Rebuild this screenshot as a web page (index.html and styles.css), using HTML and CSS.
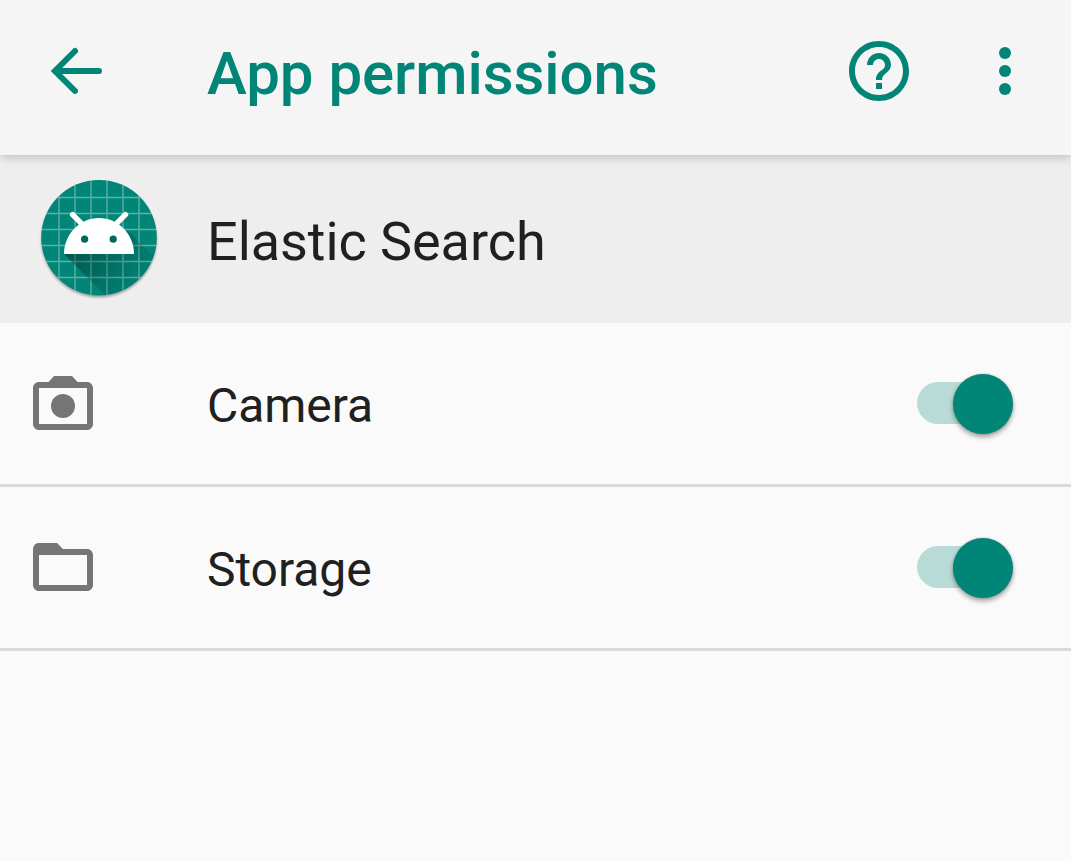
FILE: index.html
```html
<!DOCTYPE html>
<html lang="en">
<head>
  <meta charset="utf-8">
  <title>App permissions</title>
  <link rel="stylesheet" href="styles.css">
</head>
<body>
  <header class="toolbar">
    <svg class="icon back" viewBox="0 0 72 72" role="img" aria-label="Back">
      <path d="M48 16 28 36l20 20M28 36h44" />
    </svg>
    <h1 class="title">App permissions</h1>
    <svg class="icon help" viewBox="0 0 24 24" role="img" aria-label="Help">
      <path d="M11 18h2v-2h-2v2zm1-16C6.48 2 2 6.48 2 12s4.48 10 10 10 10-4.48 10-10S17.52 2 12 2zm0 18c-4.41 0-8-3.59-8-8s3.59-8 8-8 8 3.59 8 8-3.59 8-8 8zm0-14c-2.21 0-4 1.79-4 4h2c0-1.1.9-2 2-2s2 .9 2 2c0 2-3 1.75-3 5h2c0-2.25 3-2.5 3-5 0-2.21-1.79-4-4-4z" />
    </svg>
    <svg class="icon more" viewBox="0 0 24 24" role="img" aria-label="More options">
      <circle cx="12" cy="6" r="2" /><circle cx="12" cy="12" r="2" /><circle cx="12" cy="18" r="2" />
    </svg>
  </header>

  <main>
    <section class="app">
      <svg class="app-icon" viewBox="0 4 140 140" aria-hidden="true">
        <defs>
          <clipPath id="disc"><circle cx="69" cy="72.7" r="57.8" /></clipPath>
          <linearGradient id="cast" gradientUnits="userSpaceOnUse" x1="46" y1="76" x2="106" y2="124">
            <stop offset="0" stop-color="#000" stop-opacity=".34" />
            <stop offset="1" stop-color="#000" stop-opacity=".02" />
          </linearGradient>
        </defs>
        <circle class="disc" cx="69" cy="72.7" r="57.8" />
        <g clip-path="url(#disc)">
          <path class="grid" d="M29 10v130M45 10v130M61 10v130M77 10v130M93 10v130M109 10v130M5 32.5h130M5 48.5h130M5 64.5h130M5 80.5h130M5 96.5h130M5 112.5h130" />
          <path d="M34 89 81 136h63v-24L98 66z" fill="url(#cast)" />
        </g>
        <path class="antennae" d="m42.6 49.6 10 10M95.4 49.6l-10 10" />
        <path class="head" d="M34 89c0-20 16-36 35-36s35 16 35 36z" />
        <circle class="eye" cx="54.6" cy="74.2" r="3.6" /><circle class="eye" cx="83.2" cy="74.2" r="3.6" />
      </svg>
      <h2 class="app-name">Elastic Search</h2>
    </section>

    <ul class="permissions">
      <li class="permission">
        <svg class="icon glyph" viewBox="0 0 24 24" aria-hidden="true">
          <path fill-rule="evenodd" d="M20 5h-3.17L15 3H9L7.17 5H4c-1.1 0-2 .9-2 2v12c0 1.1.9 2 2 2h16c1.1 0 2-.9 2-2V7c0-1.1-.9-2-2-2zm0 14H4V7h16v12z" />
          <circle cx="12" cy="13" r="4" />
        </svg>
        <span class="label">Camera</span>
        <span class="switch" role="switch" aria-checked="true" aria-label="Camera"><span class="thumb"></span></span>
      </li>
      <li class="permission">
        <svg class="icon glyph" viewBox="0 0 24 24" aria-hidden="true">
          <path fill-rule="evenodd" d="M10 4H4c-1.1 0-2 .9-2 2v12c0 1.1.9 2 2 2h16c1.1 0 2-.9 2-2V8c0-1.1-.9-2-2-2h-8l-2-2zm10 14H4V8h16v10z" />
        </svg>
        <span class="label">Storage</span>
        <span class="switch" role="switch" aria-checked="true" aria-label="Storage"><span class="thumb"></span></span>
      </li>
    </ul>
  </main>
</body>
</html>
```
FILE: styles.css
```css
* {
  box-sizing: border-box;
}

body {
  margin: 0;
  min-height: 100vh;
  background: #fafafa;
  color: #202020;
  font-family: Roboto, sans-serif;
}

.toolbar {
  position: relative;
  display: flex;
  align-items: center;
  height: 155px;
  padding: 0 30px 13px 27px;
  background: #f5f5f5;
  box-shadow: 0 2px 8px rgba(0, 0, 0, .16), 0 3px 16px rgba(0, 0, 0, .05);
  color: #008577;
}

.icon {
  flex: none;
  width: 72px;
  height: 72px;
  fill: currentColor;
}

.back {
  margin-right: 108px;
  overflow: visible;
}

.back path {
  fill: none;
  stroke: currentColor;
  stroke-width: 6;
  stroke-linecap: round;
}

.title {
  flex: 1;
  margin: 0;
  padding-top: 5px;
  font-size: 60px;
  font-weight: 500;
  letter-spacing: -.06px;
}

.more {
  margin-left: 54px;
}

.app {
  display: flex;
  align-items: center;
  height: 168px;
  padding-left: 30px;
  background: #eee;
}

.app-icon {
  flex: none;
  width: 140px;
  height: 140px;
  margin-right: 37px;
}

.disc {
  fill: #008577;
  filter: drop-shadow(0 2px 1px rgba(0, 0, 0, .32));
}

.grid {
  fill: none;
  stroke: #fff;
  stroke-opacity: .36;
  stroke-width: 1.4;
}

.antennae {
  fill: none;
  stroke: #fff;
  stroke-width: 5.5;
  stroke-linecap: round;
}

.head {
  fill: #fff;
}

.eye {
  fill: #00695d;
}

.app-name {
  margin: 0;
  padding-top: 5px;
  font-size: 54px;
  font-weight: 400;
  letter-spacing: -.06px;
}

.permissions {
  margin: 0;
  padding: 0;
  list-style: none;
}

.permission {
  display: flex;
  align-items: center;
  height: 164px;
  padding: 0 58px 1px 27px;
  border-bottom: 3px solid #dadada;
}

.glyph {
  margin-right: 108px;
  color: #757575;
}

.label {
  flex: 1;
  padding-top: 5px;
  font-size: 48px;
  letter-spacing: -.06px;
}

.switch {
  display: flex;
  align-items: center;
  justify-content: flex-end;
  width: 96px;
  height: 42px;
  border-radius: 21px;
  background: linear-gradient(to right, #b8dbd8 75px, transparent 75px);
}

.thumb {
  flex: none;
  width: 60px;
  height: 60px;
  margin: 1px .5px 0 0;
  border-radius: 50%;
  background: #008577;
  box-shadow: 0 3px 5px rgba(0, 0, 0, .36), 0 0 2px rgba(0, 0, 0, .2);
}
```
